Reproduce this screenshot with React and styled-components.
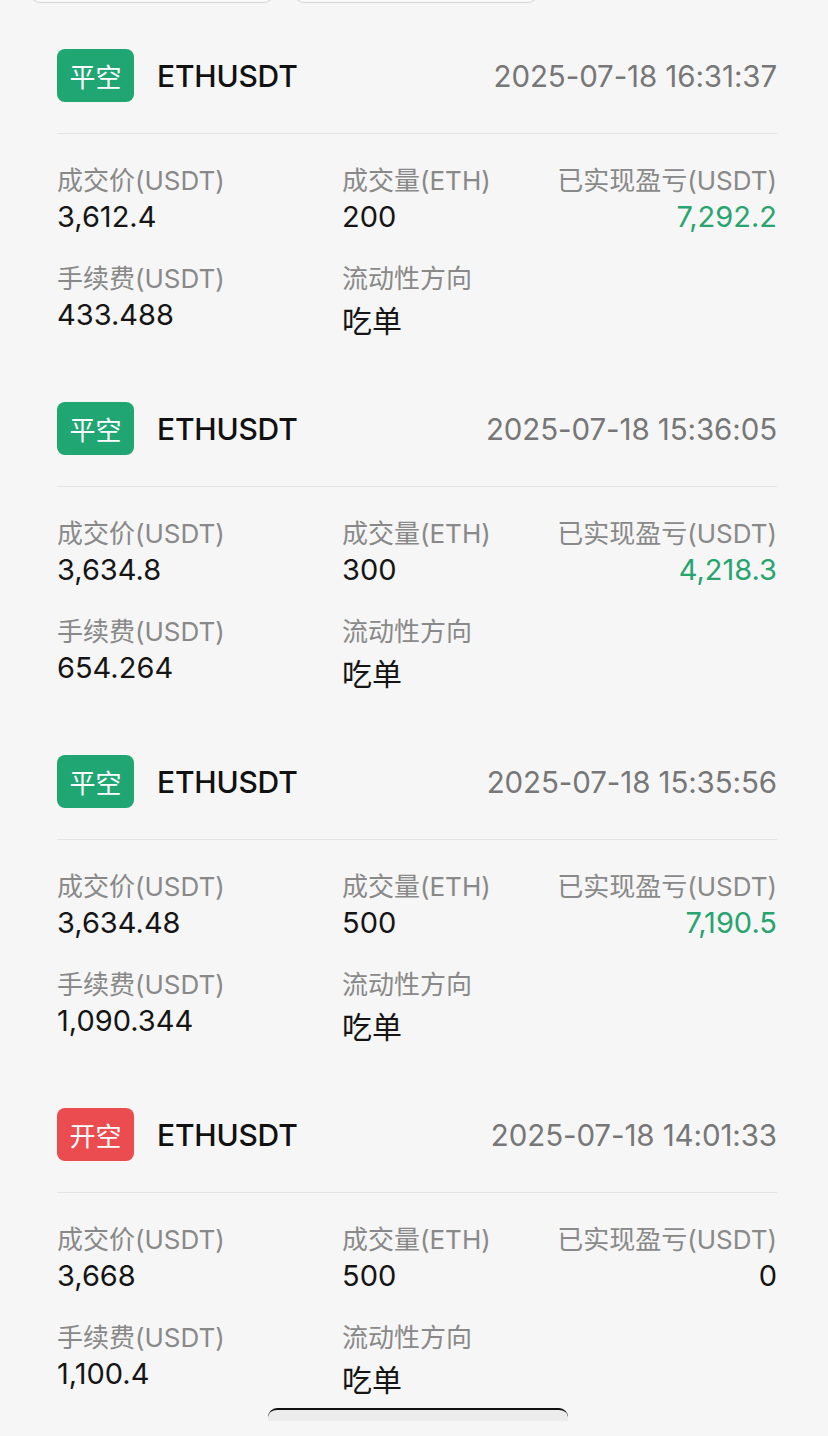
import React from "react";
import styled, { createGlobalStyle } from "styled-components";

const Global = createGlobalStyle`
  html, body { margin: 0; padding: 0; background: #f6f6f6; }
  body { font-family: Inter, "Noto Sans CJK SC", sans-serif; }
`;

const Page = styled.div`
  position: relative;
  min-height: 1436px;
  background: #f6f6f6;
  overflow: hidden;
`;

const FilterBar = styled.div`
  height: 3px;
  overflow: hidden;
  display: flex;
  align-items: flex-end;
  gap: 20px;
  padding-left: 30px;
`;

const FilterButton = styled.div`
  flex: none;
  width: 244px;
  height: 40px;
  box-sizing: border-box;
  background: #fafafa;
  border: 1.5px solid #d6d6d6;
  border-radius: 10px;
`;

const List = styled.div`
  padding: 46px 51px 0 57px;
  display: flex;
  flex-direction: column;
  gap: 69px;
`;

const Card = styled.div`
  display: flex;
  flex-direction: column;
`;

const Header = styled.div`
  display: flex;
  align-items: center;
  height: 53px;
`;

const Badge = styled.div`
  width: 77px;
  height: 53px;
  border-radius: 8px;
  background: ${p => (p.$open ? "#ea4c50" : "#1fa673")};
  color: #fff;
  font-family: "Noto Sans CJK SC", sans-serif;
  font-size: 26px;
  display: flex;
  align-items: center;
  justify-content: center;
`;

const Symbol = styled.div`
  margin-left: 23px;
  font-size: 30px;
  font-weight: 500;
  color: #111;
  letter-spacing: -0.2px;
`;

const Time = styled.div`
  margin-left: auto;
  font-size: 29.5px;
  color: #777;
  letter-spacing: -0.1px;
`;

const Divider = styled.div`
  margin-top: 31px;
  height: 1px;
  background: #e4e4e4;
`;

const Grid = styled.div`
  margin-top: 30px;
  display: grid;
  grid-template-columns: 285px 1fr auto;
  row-gap: 27px;
`;

const Field = styled.div`
  display: flex;
  flex-direction: column;
  gap: 1px;
  align-items: ${p => (p.$right ? "flex-end" : "flex-start")};
`;

const Label = styled.div`
  font-family: Inter, "Noto Sans CJK SC", sans-serif;
  font-size: 26px;
  line-height: 34px;
  color: #898989;
  white-space: nowrap;
`;

const Value = styled.div`
  font-size: 29px;
  line-height: 36px;
  color: ${p => (p.$green ? "#27a46f" : "#151515")};
  white-space: nowrap;
`;

const CjkValue = styled(Value)`
  font-family: "Noto Sans CJK SC", sans-serif;
  font-size: 30px;
  padding-top: 4px;
  margin-bottom: -4px;
`;

const HomeBar = styled.div`
  position: absolute;
  left: 268px;
  top: 1408px;
  width: 300px;
  height: 13px;
  box-sizing: border-box;
  border-top: 2.5px solid #111;
  border-radius: 9px 9px 0 0;
  background: #ececec;
`;

const trades = [
  { side: "平空", open: false, time: "2025-07-18 16:31:37", price: "3,612.4", qty: "200", pnl: "7,292.2", fee: "433.488" },
  { side: "平空", open: false, time: "2025-07-18 15:36:05", price: "3,634.8", qty: "300", pnl: "4,218.3", fee: "654.264" },
  { side: "平空", open: false, time: "2025-07-18 15:35:56", price: "3,634.48", qty: "500", pnl: "7,190.5", fee: "1,090.344" },
  { side: "开空", open: true, time: "2025-07-18 14:01:33", price: "3,668", qty: "500", pnl: "0", fee: "1,100.4" },
];

export default function App() {
  return (
    <Page>
      <Global />
      <FilterBar>
        <FilterButton />
        <FilterButton />
      </FilterBar>
      <List>
        {trades.map((t, i) => (
          <Card key={i}>
            <Header>
              <Badge $open={t.open}>{t.side}</Badge>
              <Symbol>ETHUSDT</Symbol>
              <Time>{t.time}</Time>
            </Header>
            <Divider />
            <Grid>
              <Field>
                <Label>成交价(USDT)</Label>
                <Value>{t.price}</Value>
              </Field>
              <Field>
                <Label>成交量(ETH)</Label>
                <Value>{t.qty}</Value>
              </Field>
              <Field $right>
                <Label>已实现盈亏(USDT)</Label>
                <Value $green={t.pnl !== "0"}>{t.pnl}</Value>
              </Field>
              <Field>
                <Label>手续费(USDT)</Label>
                <Value>{t.fee}</Value>
              </Field>
              <Field>
                <Label>流动性方向</Label>
                <CjkValue>吃单</CjkValue>
              </Field>
              <div />
            </Grid>
          </Card>
        ))}
      </List>
      <HomeBar />
    </Page>
  );
}
